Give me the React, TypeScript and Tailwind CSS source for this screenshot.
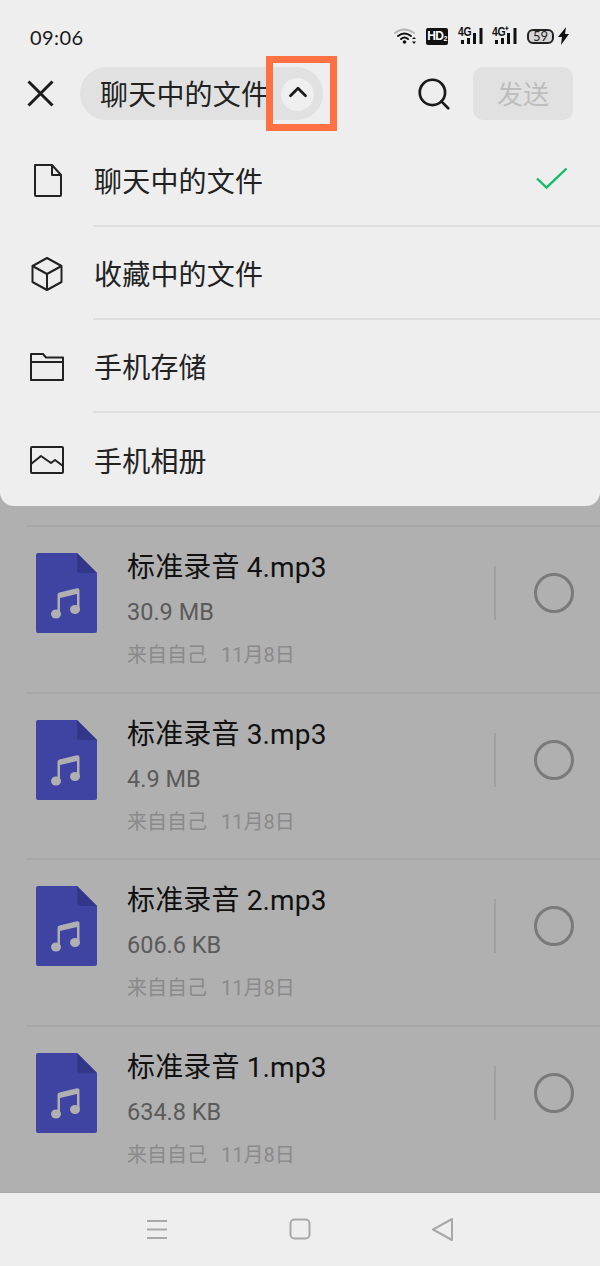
import React from 'react';
import { Search, ChevronUp } from 'lucide-react';

const cjk = { fontFamily: '"Roboto", "Noto Sans CJK SC", sans-serif' };

function Signal({ label }: { label: string }) {
  return (
    <div className="relative w-[25px] h-[18px]">
      <span className="absolute left-0 top-[-2px] origin-left scale-x-[0.8] text-[13px] leading-[13px] font-bold tracking-[-0.5px] text-[#111] whitespace-nowrap">{label}</span>
      <svg width="25" height="18" viewBox="0 0 25 18" className="absolute left-0 top-0">
        <rect x="3" y="13" width="3" height="4" fill="#111" />
        <rect x="9" y="11" width="3" height="6" fill="#111" />
        <rect x="15" y="6" width="3" height="11" fill="#111" />
        <rect x="21.500" y="1" width="3" height="16" fill="#111" />
      </svg>
    </div>
  );
}

function StatusBar() {
  return (
    <div className="h-[67px] flex items-start justify-between pl-[30px] pr-[30px] pt-[25px]">
      <span className="text-[20px] leading-[24px] text-[#1a1a1a] tracking-[0.4px]" style={{ fontFamily: 'Lato, sans-serif' }}>09:06</span>
      <div className="flex items-center h-[24px] mt-[-1px]">
        <svg width="22" height="18" viewBox="0 0 22 18" fill="none" strokeLinecap="round">
          <path d="M1 6 Q10 -1 20 6" stroke="#b5b5b5" strokeWidth="2" />
          <path d="M4 9 Q10.500 4 17 9" stroke="#111" strokeWidth="2" />
          <path d="M7 12 Q10.500 9 14 12" stroke="#111" strokeWidth="2" />
          <circle cx="10.500" cy="15" r="1.800" fill="#111" />
          <path d="M18 12 L20 10 L22 12 Z M18 14.500 L22 14.500 L20 17 Z" fill="#111" />
        </svg>
        <div className="ml-[10px] w-[22px] h-[17px] bg-[#111] rounded-[2px] flex items-center justify-center text-white text-[12px] font-bold leading-none tracking-[-0.5px]" style={{ fontFamily: '"Liberation Sans", sans-serif' }}>HD<span className="text-[7px] mt-[4px]">2</span></div>
        <div className="ml-[10px]" style={{ fontFamily: '"Liberation Sans", sans-serif' }}><Signal label="4G" /></div>
        <div className="ml-[9px]" style={{ fontFamily: '"Liberation Sans", sans-serif' }}><Signal label="4G⁺" /></div>
        <div className="ml-[10px] w-[27px] h-[15px] rounded-[6px] border-2 border-[#222] bg-[#d6d6d6] flex items-center justify-center text-[13px] leading-none text-[#222]" style={{ fontFamily: 'Lato, sans-serif' }}>59</div>
        <svg width="12" height="18" viewBox="0 0 12 18" className="ml-[4px]">
          <path d="M8 0 L0 10 H4 L3 18 L11 7 H7 Z" fill="#111" />
        </svg>
      </div>
    </div>
  );
}

function Toolbar() {
  return (
    <div className="h-[53px] flex items-center pl-[23px] pr-[27px]">
      <svg width="35" height="35" viewBox="0 0 35 35" fill="none" stroke="#1a1a1a" strokeWidth="3" className="shrink-0">
        <path d="M5.500 5.500 L29.500 29.500 M29.500 5.500 L5.500 29.500" />
      </svg>
      <div className="ml-[22px] w-[243px] h-[53px] rounded-full bg-[#e1e1e1] flex items-center pl-[20px] pr-[9px] justify-between">
        <span className="text-[28px] leading-none pt-[4px] tracking-[0.2px] text-[#222] whitespace-nowrap">聊天中的文件</span>
        <div className="w-[33px] h-[33px] mt-[1px] rounded-full bg-[#efefef] flex items-center justify-center shrink-0">
          <ChevronUp size={30} strokeWidth={2.2} className="text-[#1a1a1a] mt-[-4px]" />
        </div>
      </div>
      <Search size={38} strokeWidth={1.7} className="ml-[92px] text-[#1a1a1a] shrink-0" />
      <div className="ml-[20px] w-[100px] h-[53px] rounded-[10px] bg-[#e1e1e1] flex items-center justify-center text-[26px] pt-[3px] text-[#bdbdbd]">发送</div>
    </div>
  );
}

const iconCls = 'w-[38px] h-[38px]';

function FileIcon() {
  return (
    <svg viewBox="0 0 38 38" className={iconCls} fill="none" stroke="#222" strokeWidth="2" strokeLinejoin="round">
      <path d="M8 3 H25 L34 13 V33 Q34 34 33 34 H9 Q8 34 8 33 Z" transform="translate(-1 0)" />
      <path d="M24 3 V13 H33" />
    </svg>
  );
}
function BoxIcon() {
  return (
    <svg viewBox="0 0 38 38" className={iconCls} fill="none" stroke="#222" strokeWidth="2" strokeLinejoin="round">
      <path d="M19 3 L33.500 11 V27 L19 35 L4.500 27 V11 Z" />
      <path d="M4.500 11 L19 19 L33.500 11 M19 19 V35" />
    </svg>
  );
}
function FolderIcon() {
  return (
    <svg viewBox="0 0 38 38" className={iconCls} fill="none" stroke="#222" strokeWidth="2" strokeLinejoin="round">
      <path d="M3 6 H15 L18 9.500 H35 V32 H3 Z" />
      <path d="M3 14 H35" />
    </svg>
  );
}
function ImageIcon() {
  return (
    <svg viewBox="0 0 38 38" className={iconCls} fill="none" stroke="#222" strokeWidth="2" strokeLinejoin="round">
      <rect x="3" y="6" width="32" height="26" rx="1" />
      <path d="M3 23 L13 15 L23 22 L27 19 L35 25" />
    </svg>
  );
}

const menu = [
  { label: '聊天中的文件', icon: FileIcon, checked: true },
  { label: '收藏中的文件', icon: BoxIcon },
  { label: '手机存储', icon: FolderIcon },
  { label: '手机相册', icon: ImageIcon },
];

const files = [
  { name: '标准录音 4.mp3', size: '30.9 MB' },
  { name: '标准录音 3.mp3', size: '4.9 MB' },
  { name: '标准录音 2.mp3', size: '606.6 KB' },
  { name: '标准录音 1.mp3', size: '634.8 KB' },
];

function MusicFile() {
  return (
    <svg width="61" height="80" viewBox="0 0 61 80" className="shrink-0">
      <path d="M2 0 H41 L61 20 V78 Q61 80 59 80 H2 Q0 80 0 78 V2 Q0 0 2 0 Z" fill="#3f44a3" />
      <path d="M41 0 L61 20 H44 Q41 20 41 17 Z" fill="#33378a" />
      <path d="M21.500 61 V42 Q21.500 40 23.500 39.600 L41 35.200 Q43.500 35 43.500 37 V57 H41 V41 L24 45 V61 Z" fill="#b0b0b0" />
      <ellipse cx="20" cy="61" rx="5" ry="4.500" fill="#b0b0b0" />
      <ellipse cx="39" cy="56.500" rx="5" ry="4.500" fill="#b0b0b0" />
    </svg>
  );
}

export default function App() {
  return (
    <div className="relative w-[600px] h-[1266px] bg-[#b0b0b0] overflow-hidden flex flex-col" style={cjk}>
      <div className="relative z-10 h-[506px] shrink-0 bg-[#eeeeee] rounded-b-[14px]">
        <StatusBar />
        <Toolbar />
        <div className="mt-[14px]">
          {menu.map((m, i) => (
            <div key={m.label} className="h-[93px] flex items-center pl-[28px]">
              <m.icon />
              <div className={'ml-[27px] flex-1 h-full flex items-center pr-[31px] ' + (i < 3 ? 'border-b-2 border-[#dedede]' : '')}>
                <span className="text-[28px] leading-none pt-[6px] pl-[1px] tracking-[0.2px] text-[#222] flex-1">{m.label}</span>
                {m.checked && (
                  <svg width="34" height="24" viewBox="0 0 34 24" fill="none" stroke="#0fbd64" strokeWidth="2.400" className="mt-[-2px]">
                    <path d="M2 11.500 L11.500 20.500 L31.500 1.500" />
                  </svg>
                )}
              </div>
            </div>
          ))}
        </div>
      </div>

      <div className="flex-1 pt-[19px] pl-[27px] overflow-hidden">
        {files.map((f) => (
          <div key={f.name} className="h-[166.500px] border-t-2 border-[#a6a6a6] flex items-start">
            <div className="ml-[9px] mt-[26px]"><MusicFile /></div>
            <div className="ml-[30px] w-[367px] mt-[24px]">
              <div className="text-[28px] leading-[34px] tracking-[0.15px] text-[#111] whitespace-nowrap">{f.name}</div>
              <div className="mt-[14px] text-[23.500px] leading-[26px] text-[#5b5b5b]">{f.size}</div>
              <div className="mt-[17px] text-[20px] leading-[26px] text-[#8a8a8a] whitespace-nowrap">来自自己<span className="ml-[14px]">11月8日</span></div>
            </div>
            <div className="mt-[39px] w-[2px] h-[54px] bg-[#a0a0a0]" />
            <div className="mt-[46px] ml-[38px] w-[40px] h-[40px] rounded-full border-[3px] border-[#7a7a7a]" />
          </div>
        ))}
      </div>

      <div className="relative z-10 h-[74px] shrink-0 bg-[#eeeeee] border-t border-[#a6a6a6] flex items-center">
        <svg width="600" height="74" viewBox="0 0 600 74" fill="none" stroke="#a8a8a8" strokeWidth="2">
          <path d="M147 28 H167 M147 36.500 H167 M147 45 H167" />
          <rect x="290.500" y="26.500" width="19" height="19" rx="4" />
          <path d="M452 26 L433 36.500 L452 47 Z" strokeLinejoin="round" />
        </svg>
      </div>

      <div className="absolute left-[266px] top-[56px] w-[71px] h-[75px] border-[7px] border-[#ff7043] z-20" />
    </div>
  );
}
